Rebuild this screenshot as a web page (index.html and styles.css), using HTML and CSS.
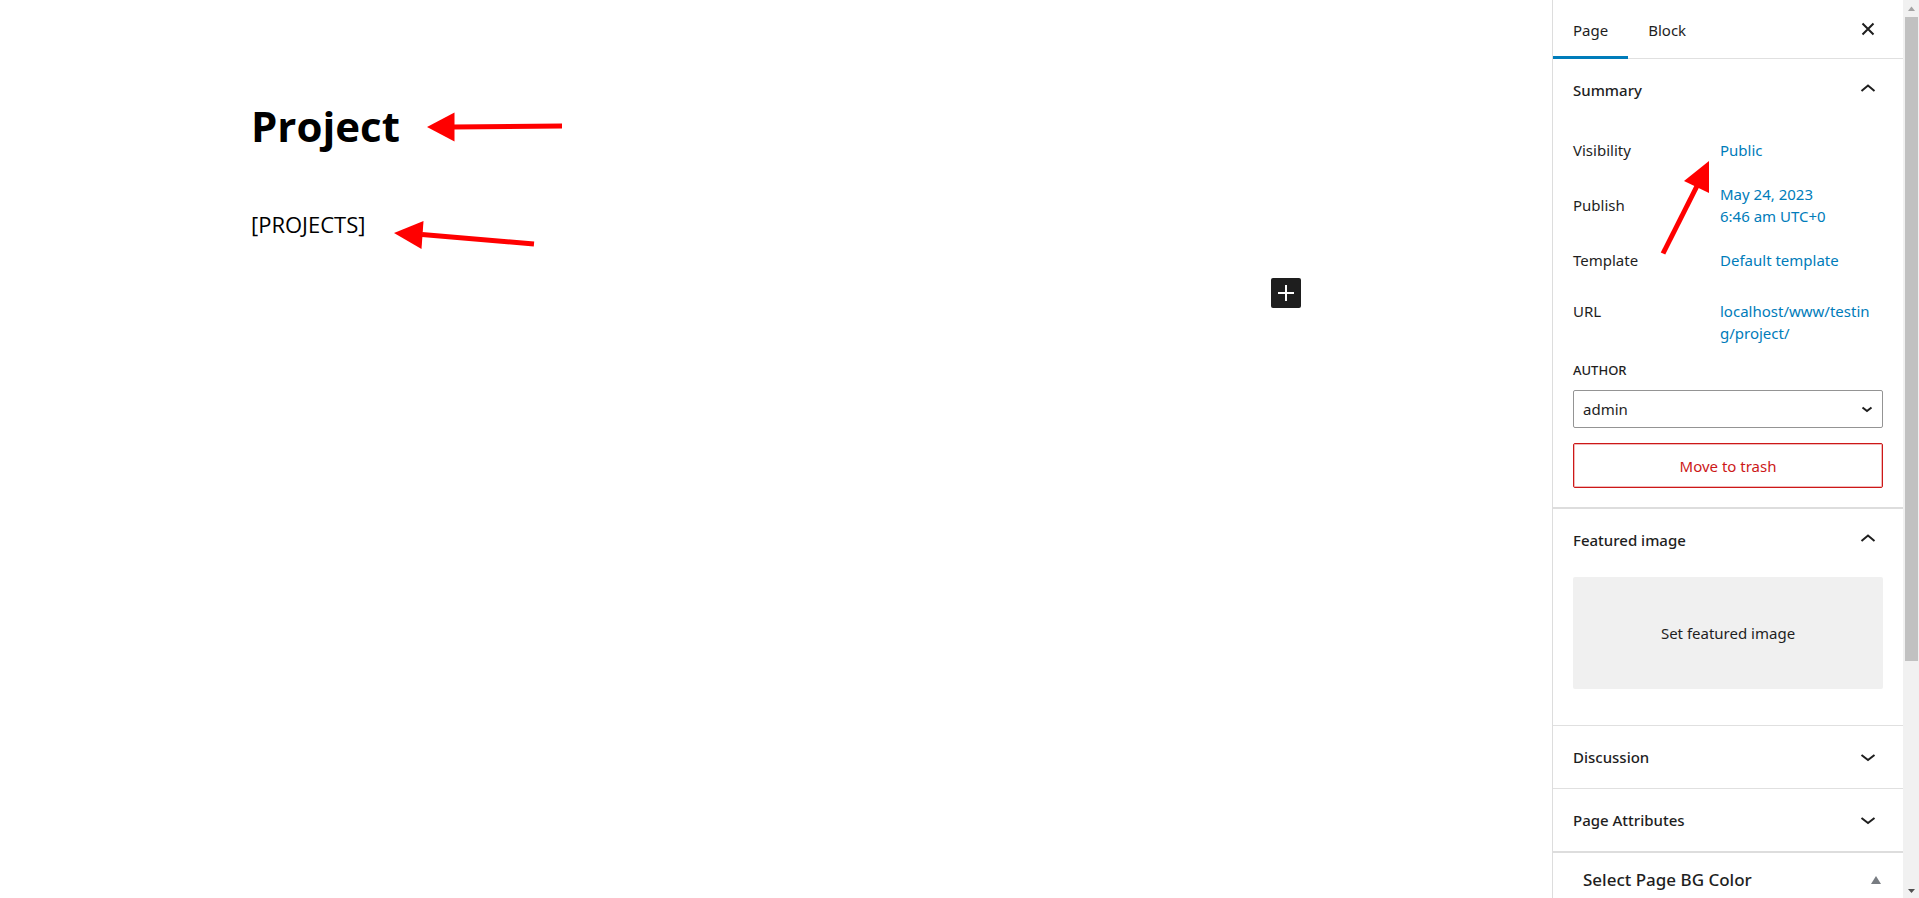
FILE: index.html
```html
<!DOCTYPE html>
<html lang="en">
<head>
<meta charset="utf-8">
<title>Project</title>
<link rel="stylesheet" href="styles.css">
</head>
<body>
<div class="app">
  <main class="editor">
    <article class="canvas">
      <h1 class="title">Project</h1>
      <p class="shortcode">[PROJECTS]</p>
      <button class="inserter" type="button" aria-label="Add block">
        <svg width="30" height="30" viewBox="0 0 30 30"><path d="M15 7v16M7 15h16" stroke="#fff" stroke-width="2" fill="none"/></svg>
      </button>
      <svg class="arrow arrow-title" width="136" height="30" viewBox="0 0 136 30"><path d="M26 15L135 14" stroke="#f00" stroke-width="5"/><path d="M0 15L27.500 0.500V29.500Z" fill="#f00"/></svg>
      <svg class="arrow arrow-text" width="142" height="30" viewBox="0 0 142 30"><path d="M28 14.500L140 24" stroke="#f00" stroke-width="5"/><path d="M0 13L29.500 1L27.500 29Z" fill="#f00"/></svg>
    </article>
  </main>

  <aside class="sidebar">
    <header class="tabs">
      <button class="tab tab-active" type="button">Page</button>
      <button class="tab" type="button">Block</button>
      <button class="close" type="button" aria-label="Close settings">
        <svg width="30" height="30" viewBox="0 0 30 30"><path d="M9.500 9.500l11 11M20.500 9.500l-11 11" stroke="#1e1e1e" stroke-width="2" fill="none"/></svg>
      </button>
    </header>

    <section class="panel panel-summary">
      <h2 class="panel-heading"><button class="panel-toggle" type="button" aria-expanded="true">Summary
        <svg class="chevron chevron-up" width="30" height="30" viewBox="0 0 30 30"><path d="M8.500 18L15 12.500L21.500 18" stroke="#1e1e1e" stroke-width="2" fill="none"/></svg></button></h2>
      <dl class="facts">
        <div class="fact fact-visibility"><dt>Visibility</dt><dd><a href="#visibility">Public</a></dd></div>
        <div class="fact fact-publish"><dt>Publish</dt><dd><a href="#publish">May 24, 2023<br>6:46 am UTC+0</a></dd></div>
        <div class="fact fact-template"><dt>Template</dt><dd><a href="#template">Default template</a></dd></div>
        <div class="fact fact-url"><dt>URL</dt><dd><a href="#url">localhost/www/testing/project/</a></dd></div>
      </dl>
      <label class="author-label" for="author">Author</label>
      <div class="select-wrap">
        <select class="author" id="author"><option>admin</option></select>
        <svg class="select-icon" width="22" height="22" viewBox="0 0 22 22"><path d="M6.500 9.500L11 13L15.500 9.500" stroke="#1e1e1e" stroke-width="2" fill="none"/></svg>
      </div>
      <button class="trash" type="button">Move to trash</button>
      <svg class="arrow arrow-public" width="50" height="96" viewBox="0 0 50 96"><path d="M3 92.500L37 25" stroke="#f00" stroke-width="5"/><path d="M49 0V32L24 20Z" fill="#f00"/></svg>
    </section>

    <section class="panel panel-featured">
      <h2 class="panel-heading"><button class="panel-toggle" type="button" aria-expanded="true">Featured image
        <svg class="chevron chevron-up" width="30" height="30" viewBox="0 0 30 30"><path d="M8.500 18L15 12.500L21.500 18" stroke="#1e1e1e" stroke-width="2" fill="none"/></svg></button></h2>
      <button class="featured" type="button">Set featured image</button>
    </section>

    <section class="panel">
      <h2 class="panel-heading"><button class="panel-toggle" type="button" aria-expanded="false">Discussion
        <svg class="chevron" width="30" height="30" viewBox="0 0 30 30"><path d="M8.500 13L15 18L21.500 13" stroke="#1e1e1e" stroke-width="2" fill="none"/></svg></button></h2>
    </section>

    <section class="panel panel-last">
      <h2 class="panel-heading"><button class="panel-toggle" type="button" aria-expanded="false">Page Attributes
        <svg class="chevron" width="30" height="30" viewBox="0 0 30 30"><path d="M8.500 13L15 18L21.500 13" stroke="#1e1e1e" stroke-width="2" fill="none"/></svg></button></h2>
    </section>

    <section class="metabox">
      <h2 class="metabox-heading"><button class="metabox-toggle" type="button" aria-expanded="true">Select Page BG Color
        <svg width="10" height="8" viewBox="0 0 10 8"><path d="M5 0L10 8H0Z" fill="#787c82"/></svg></button></h2>
    </section>
  </aside>

  <div class="scrollbar" aria-hidden="true">
    <svg class="scroll-arrow" width="16" height="17" viewBox="0 0 16 17"><path d="M8.500 6.500L12 11H5Z" fill="#a3a3a3"/></svg>
    <div class="track"><div class="thumb"></div></div>
    <svg class="scroll-arrow" width="16" height="17" viewBox="0 0 16 17"><path d="M5 8H12L8.500 12Z" fill="#505050"/></svg>
  </div>
</div>
</body>
</html>
```

FILE: styles.css
```css
* { box-sizing: border-box; }

body {
  margin: 0;
  background: #fff;
  color: #1e1e1e;
  font: 15px/22px "Noto Sans", "Open Sans", sans-serif;
}

button, select { font: inherit; color: inherit; }
button { border: 0; padding: 0; background: none; cursor: pointer; }
svg { display: block; flex: none; }
a { color: #007cba; text-decoration: none; }

.app { display: flex; height: 100vh; overflow: hidden; }

/* Editor canvas */
.editor { flex: 1; padding: 96px 24px 0; }
.canvas {
  position: relative;
  max-width: 1050px;
  margin: 0 auto;
  color: #000;
  font-family: "Open Sans", "Noto Sans", sans-serif;
}
.title { margin: 0; font-size: 42px; line-height: 60px; font-weight: 700; }
.shortcode { margin: 52px 0 0; font-size: 22px; line-height: 32px; }
.inserter {
  display: block;
  margin: 38px 0 0 auto;
  border-radius: 2px;
  background: #1e1e1e;
}

.arrow { position: absolute; pointer-events: none; }
.arrow-title { left: 176px; top: 16px; }
.arrow-text { left: 143px; top: 124px; }
.arrow-public { left: 107px; top: 102px; }

/* Settings sidebar */
.sidebar { flex: none; width: 351px; border-left: 1px solid #ddd; overflow: hidden; }
.tabs {
  display: flex;
  align-items: stretch;
  height: 59px;
  padding-right: 20px;
  border-bottom: 1px solid #e0e0e0;
}
.tab { padding: 0 20px; height: 59px; }
.tab-active { box-shadow: inset 0 -3px #007cba; }
.close { margin: 0 0 0 auto; }

.panel { position: relative; padding: 0 20px; border-bottom: 1px solid #e0e0e0; }
.panel-heading, .metabox-heading { margin: 0; font-size: 15px; font-weight: 500; }
.panel-heading { margin: 0 -20px; }
.panel-toggle {
  display: flex;
  align-items: center;
  justify-content: space-between;
  width: 100%;
  padding: 20px;
  height: 62px;
}
.chevron-up { margin-bottom: 4px; }

.panel-summary { padding-bottom: 19px; border-bottom: 2px solid #ddd; }
.facts { margin: 0; }
.fact { display: flex; align-items: center; min-height: 44px; }
.fact dt { width: 147px; }
.fact dd { flex: 1; margin: 0; padding-right: 10px; overflow-wrap: anywhere; }
.fact-visibility { margin-top: 7px; }
.fact-publish { margin-top: 11px; }
.fact-template { margin-top: 11px; }
.fact-url { align-items: flex-start; margin-top: 18px; }
.author-label {
  display: block;
  margin-top: 16px;
  font-size: 13px;
  line-height: 20px;
  font-weight: 500;
  text-transform: uppercase;
}
.select-wrap { position: relative; margin-top: 10px; }
.author {
  display: block;
  appearance: none;
  width: 100%;
  height: 38px;
  padding: 0 9px;
  border: 1px solid #949494;
  border-radius: 2px;
  background: #fff;
}
.select-icon { position: absolute; right: 5px; top: 8px; pointer-events: none; }
.trash {
  display: block;
  width: 100%;
  height: 45px;
  margin-top: 15px;
  border: 1px solid #cc1818;
  border-radius: 2px;
  box-shadow: inset 0 0 0 1px #f2b9b9;
  color: #cc1818;
}

.panel-featured { padding-bottom: 36px; }
.featured {
  display: block;
  width: 100%;
  height: 112px;
  margin-top: 6px;
  border-radius: 2px;
  background: #f0f0f0;
}
.panel-last { border-bottom: 2px solid #ddd; }

.metabox-toggle {
  display: flex;
  align-items: center;
  justify-content: space-between;
  width: 100%;
  padding: 16px 22px 16px 30px;
  font-size: 17px;
  line-height: 22px;
}

/* Scrollbar */
.scrollbar { display: flex; flex: none; flex-direction: column; width: 16px; background: #f1f1f1; }
.track { flex: 1; padding: 0 1px 0 2px; }
.thumb { height: 74.5%; background: #c1c1c1; }
```
